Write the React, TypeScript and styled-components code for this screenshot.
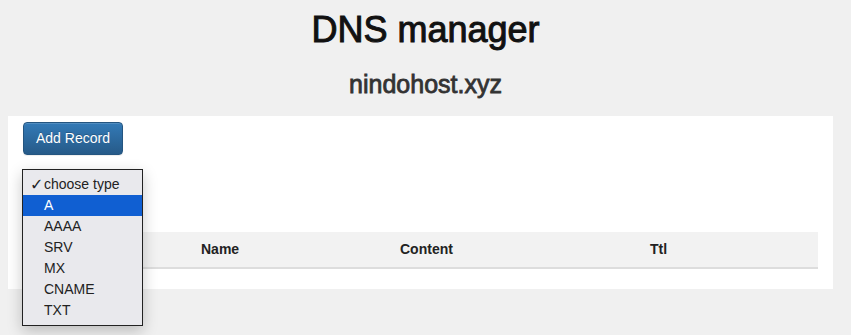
import React, { useState } from 'react';
import styled, { createGlobalStyle } from 'styled-components';

const GlobalStyle = createGlobalStyle`
  html, body {
    margin: 0;
    padding: 0;
    background: #f0f0f0;
    font-family: "Liberation Sans", Arial, sans-serif;
    font-size: 14px;
    color: #333;
  }
`;

const Page = styled.div`
  min-height: 335px;
  box-sizing: border-box;
  padding: 10px 8px 0 8px;
`;

const Title = styled.h1`
  margin: 0;
  font-size: 36px;
  line-height: 40px;
  font-weight: 400;
  -webkit-text-stroke: 1px #111;
  color: #111;
  text-align: center;
`;

const Subtitle = styled.h3`
  margin: 21px 0 0 0;
  font-size: 25px;
  line-height: 27.5px;
  font-weight: 400;
  -webkit-text-stroke: 0.8px #333;
  color: #333;
  text-align: center;
`;

const Panel = styled.div`
  margin-top: 17px;
  width: 825px;
  box-sizing: border-box;
  background: #fff;
  padding: 6px 15px 20px 15px;
`;

const PrimaryButton = styled.button`
  display: inline-block;
  font-family: inherit;
  font-size: 14px;
  line-height: 19px;
  padding: 6px 12px;
  color: #fff;
  border: 1px solid #245580;
  border-radius: 4px;
  background-image: linear-gradient(to bottom, #337ab7 0, #265a88 100%);
  box-shadow: inset 0 1px 0 rgba(255, 255, 255, 0.15), 0 1px 1px rgba(0, 0, 0, 0.075);
  text-shadow: 0 -1px 0 rgba(0, 0, 0, 0.2);
  cursor: pointer;
`;

const SelectWrap = styled.div`
  position: relative;
  margin-top: 19px;
  width: 120px;
  height: 21px;
`;

const Menu = styled.ul`
  position: absolute;
  top: -5px;
  left: -1px;
  z-index: 10;
  margin: 0;
  padding: 4px 0;
  width: 121px;
  box-sizing: border-box;
  list-style: none;
  background: #e9e9ed;
  border: 1px solid #222;
  box-shadow: 0 5px 14px rgba(0, 0, 0, 0.22);
`;

const MenuItem = styled.li<{ $active?: boolean }>`
  position: relative;
  height: 21px;
  line-height: 21px;
  padding-left: 21px;
  font-size: 14px;
  color: ${({ $active }) => ($active ? '#fff' : '#222')};
  background: ${({ $active }) => ($active ? '#105fd2' : 'transparent')};
`;

const Check = styled.span`
  position: absolute;
  left: 7px;
  top: 0;
  font-family: "DejaVu Sans", sans-serif;
  font-size: 16px;
  font-weight: bold;
`;

const Table = styled.table`
  margin-top: 37px;
  width: 795px;
  border-collapse: collapse;
  table-layout: fixed;
`;

const HeadCell = styled.th<{ $width: number }>`
  box-sizing: border-box;
  width: ${({ $width }) => $width}px;
  padding: 8px;
  line-height: 19px;
  font-size: 14px;
  font-weight: bold;
  text-align: left;
  color: #222;
  background: #f2f2f2;
  border-bottom: 2px solid #ddd;
`;

const types = ['A', 'AAAA', 'SRV', 'MX', 'CNAME', 'TXT'];

// first column sits under the open select menu
const columns = [
  { label: '', width: 170 },
  { label: 'Name', width: 199 },
  { label: 'Content', width: 250 },
  { label: 'Ttl', width: 176 },
];

export default function App() {
  const [selected] = useState('A');

  return (
    <Page>
      <GlobalStyle />
      <Title>DNS manager</Title>
      <Subtitle>nindohost.xyz</Subtitle>
      <Panel>
        <PrimaryButton>Add Record</PrimaryButton>
        <SelectWrap>
          <Menu>
            <MenuItem>
              <Check>✓</Check>choose type
            </MenuItem>
            {types.map((t) => (
              <MenuItem key={t} $active={t === selected}>
                {t}
              </MenuItem>
            ))}
          </Menu>
        </SelectWrap>
        <Table>
          <thead>
            <tr>
              {columns.map((c, i) => (
                <HeadCell key={i} $width={c.width}>
                  {c.label}
                </HeadCell>
              ))}
            </tr>
          </thead>
        </Table>
      </Panel>
    </Page>
  );
}
